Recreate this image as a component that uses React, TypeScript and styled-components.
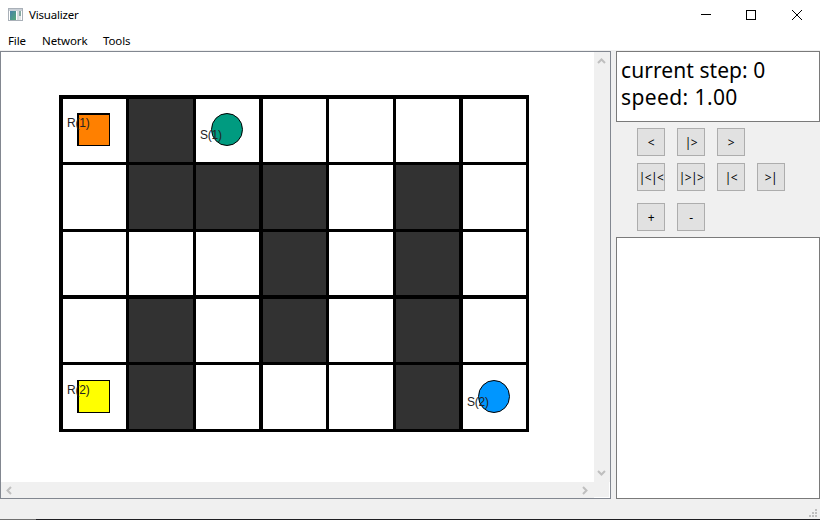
import React from "react";
import styled, { createGlobalStyle } from "styled-components";

const Global = createGlobalStyle`
  * { box-sizing: border-box; }
  body { margin: 0; background: #f0f0f0; }
`;

const Window = styled.div`
  width: 820px;
  height: 520px;
  display: flex;
  flex-direction: column;
  overflow: hidden;
  background: #f0f0f0;
  color: #000;
  font: 12px "Noto Sans", "Open Sans", sans-serif;
`;

const TitleBar = styled.header`
  height: 30px;
  flex: none;
  display: flex;
  align-items: center;
  padding-left: 8px;
  background: #fff;
`;

const Title = styled.span`
  flex: 1;
  margin-left: 6px;
  font-size: 11.5px;
  line-height: 16px;
  letter-spacing: -0.2px;
`;

const WindowButton = styled.div`
  width: 46px;
  height: 30px;
  display: flex;
  align-items: center;
  justify-content: center;
`;

const MenuBar = styled.nav`
  height: 21px;
  flex: none;
  display: flex;
  padding: 3px 0 0 8px;
  background: #fff;
  border-bottom: 1px solid #f0f0f0;
`;

const MenuItem = styled.span<{ $width: number }>`
  width: ${(p) => p.$width}px;
  font-size: 11.5px;
  line-height: 16px;
  letter-spacing: -0.1px;
`;

const Main = styled.main`
  height: 448px;
  flex: none;
  display: flex;
  gap: 5px;
`;

const View = styled.section`
  width: 611px;
  border: 1px solid #828790;
  background: #f0f0f0;
  display: grid;
  grid-template-columns: 593px 16px;
  grid-template-rows: 430px 16px;
`;

const Scene = styled.div`
  position: relative;
  background: #fff;
  padding: 43px 0 0 58px;
`;

const Maze = styled.div`
  width: 470px;
  height: 337px;
  display: grid;
  grid-template-columns: 67px 67px 66px 67px 67px 66px 67px;
  grid-template-rows: 67px 67px 66px 67px 67px;
  border: solid #000;
  border-width: 0 3px 3px 0;
`;

const Cell = styled.div<{ $wall: boolean; $left: number; $top: number }>`
  background: ${(p) => (p.$wall ? "#323232" : "#fff")};
  border: solid #000;
  border-width: ${(p) => p.$top}px 0 0 ${(p) => p.$left}px;
`;

const Robot = styled.div<{ $y: number; $color: string; $top: number }>`
  position: absolute;
  left: 76px;
  top: ${(p) => p.$y}px;
  width: 33px;
  height: 33px;
  background: ${(p) => p.$color};
  border: solid #000;
  border-width: ${(p) => p.$top}px 1px 1px 2px;
`;

const Station = styled.svg<{ $x: number; $y: number }>`
  position: absolute;
  left: ${(p) => p.$x}px;
  top: ${(p) => p.$y}px;
`;

const Tag = styled.span<{ $x: number; $y: number }>`
  position: absolute;
  left: ${(p) => p.$x}px;
  top: ${(p) => p.$y}px;
  font: 12px/14px "Liberation Sans", Arial, sans-serif;
  letter-spacing: -0.2px;
  color: #222;
`;

const VScroll = styled.div`
  display: flex;
  flex-direction: column;
  align-items: center;
  justify-content: space-between;
  padding: 5px 1px 5px 0;
`;

const HScroll = styled.div`
  display: flex;
  align-items: center;
  justify-content: space-between;
  padding: 0 5px 0 4px;
`;

const Corner = styled.div`
  border: solid #fff;
  border-width: 0 1px 1px 0;
`;

const Side = styled.aside`
  width: 204px;
  display: flex;
  flex-direction: column;
`;

const Status = styled.div`
  height: 71px;
  border: 1px solid #7a7a7a;
  background: #fff;
  padding: 5px 0 0 4px;
  font-size: 21px;
  line-height: 27px;
  white-space: nowrap;
`;

const StatusLine = styled.div<{ $spacing: number }>`
  letter-spacing: ${(p) => p.$spacing}px;
`;

const Controls = styled.div`
  height: 115px;
  padding: 6px 0 0 21px;
`;

const ButtonRow = styled.div<{ $gap: number }>`
  display: flex;
  gap: 12px;
  margin-bottom: ${(p) => p.$gap}px;
`;

const Button = styled.button`
  width: 28px;
  height: 28px;
  padding: 1px 0 0;
  border: 1px solid #adadad;
  background: #e1e1e1;
  color: #000;
  font: 12px/16px "Noto Sans", sans-serif;
  letter-spacing: -0.6px;
  display: flex;
  align-items: center;
  justify-content: center;
  white-space: nowrap;
`;

const Log = styled.div`
  flex: 1;
  border: 1px solid #7a7a7a;
  background: #fff;
`;

const StatusBar = styled.footer`
  height: 20px;
  flex: none;
  display: flex;
  align-items: flex-end;
  justify-content: flex-end;
  padding: 0 3px 2px 0;
`;

const BottomEdge = styled.div`
  height: 1px;
  background: linear-gradient(to right, #707070 36px, #1e1e22 36px);
`;

const maze = [
  ".#.....",
  ".###.#.",
  "...#.#.",
  ".#.#.#.",
  ".#...#.",
];
const leftLines = [4, 3, 3, 4, 3, 3, 4];
const topLines = [4, 3, 3, 4, 3];

const buttonRows = [
  { labels: ["<", "|>", ">"], gap: 7 },
  { labels: ["|<|<", "|>|>", "|<", ">|"], gap: 12 },
  { labels: ["+", "-"], gap: 0 },
];

const chevrons = {
  up: { w: 9, h: 8, d: "M1 6 L4.5 2.5 L8 6" },
  down: { w: 9, h: 8, d: "M1 2 L4.5 5.5 L8 2" },
  left: { w: 8, h: 9, d: "M6 1 L2.5 4.5 L6 8" },
  right: { w: 8, h: 9, d: "M2 1 L5.5 4.5 L2 8" },
};

function Chevron({ dir }: { dir: keyof typeof chevrons }) {
  const c = chevrons[dir];
  return (
    <svg width={c.w} height={c.h}>
      <path d={c.d} fill="none" stroke="#bfbfbf" strokeWidth="2" />
    </svg>
  );
}

function Disc({ x, y, color }: { x: number; y: number; color: string }) {
  return (
    <Station $x={x} $y={y} width="32" height="33">
      <ellipse cx="16" cy="16.5" rx="15.5" ry="16" fill={color} stroke="#000" />
    </Station>
  );
}

function AppIcon() {
  return (
    <svg width="15" height="14" shapeRendering="crispEdges">
      <defs>
        <linearGradient id="pane" x1="0" y1="0" x2="1" y2="1">
          <stop offset="0" stopColor="#4580a8" />
          <stop offset="1" stopColor="#55a978" />
        </linearGradient>
      </defs>
      <rect x="0.5" y="0.5" width="14" height="12" fill="#fff" stroke="#a9b0b8" />
      <rect x="1" y="1" width="13" height="2" fill="#c9cfd6" />
      <rect x="2" y="3" width="6" height="9" fill="url(#pane)" />
      <rect x="9" y="3" width="2" height="9" fill="#d5dadd" />
      <rect x="11" y="3" width="2" height="5" fill="#86aaa1" />
      <rect x="11" y="8" width="2" height="4" fill="#e3e6e8" />
    </svg>
  );
}

export default function App() {
  return (
    <Window>
      <Global />
      <TitleBar>
        <AppIcon />
        <Title>Visualizer</Title>
        <WindowButton>
          <svg width="12" height="10"><rect x="2" y="4" width="10" height="1" /></svg>
        </WindowButton>
        <WindowButton>
          <svg width="10" height="10"><rect x=".5" y=".5" width="9" height="9" fill="none" stroke="#000" /></svg>
        </WindowButton>
        <WindowButton>
          <svg width="10" height="10"><path d="M0 0 L10 10 M10 0 L0 10" stroke="#000" /></svg>
        </WindowButton>
      </TitleBar>
      <MenuBar>
        <MenuItem $width={34}>File</MenuItem>
        <MenuItem $width={61}>Network</MenuItem>
        <MenuItem $width={40}>Tools</MenuItem>
      </MenuBar>
      <Main>
        <View>
          <Scene>
            <Maze>
              {maze.flatMap((row, y) =>
                [...row].map((c, x) => (
                  <Cell key={`${x}-${y}`} $wall={c === "#"} $left={leftLines[x]} $top={topLines[y]} />
                ))
              )}
            </Maze>
            <Robot $y={61} $top={2} $color="#ff8000" />
            <Robot $y={328} $top={1} $color="#ffff00" />
            <Disc x={210} y={61} color="#009b80" />
            <Disc x={477} y={328} color="#0096ff" />
            <Tag $x={66} $y={64}>R(1)</Tag>
            <Tag $x={66} $y={331}>R(2)</Tag>
            <Tag $x={199} $y={76}>S(1)</Tag>
            <Tag $x={466} $y={343}>S(2)</Tag>
          </Scene>
          <VScroll>
            <Chevron dir="up" />
            <Chevron dir="down" />
          </VScroll>
          <HScroll>
            <Chevron dir="left" />
            <Chevron dir="right" />
          </HScroll>
          <Corner />
        </View>
        <Side>
          <Status>
            <StatusLine $spacing={0.07}>current step: 0</StatusLine>
            <StatusLine $spacing={0.4}>speed: 1.00</StatusLine>
          </Status>
          <Controls>
            {buttonRows.map((row, i) => (
              <ButtonRow key={i} $gap={row.gap}>
                {row.labels.map((label) => (
                  <Button key={label}>{label}</Button>
                ))}
              </ButtonRow>
            ))}
          </Controls>
          <Log />
        </Side>
      </Main>
      <StatusBar>
        <svg width="8" height="8" fill="#bfbfbf" shapeRendering="crispEdges">
          {[[6, 0], [3, 3], [6, 3], [0, 6], [3, 6], [6, 6]].map(([x, y]) => (
            <rect key={`${x}-${y}`} x={x} y={y} width="2" height="2" />
          ))}
        </svg>
      </StatusBar>
      <BottomEdge />
    </Window>
  );
}
